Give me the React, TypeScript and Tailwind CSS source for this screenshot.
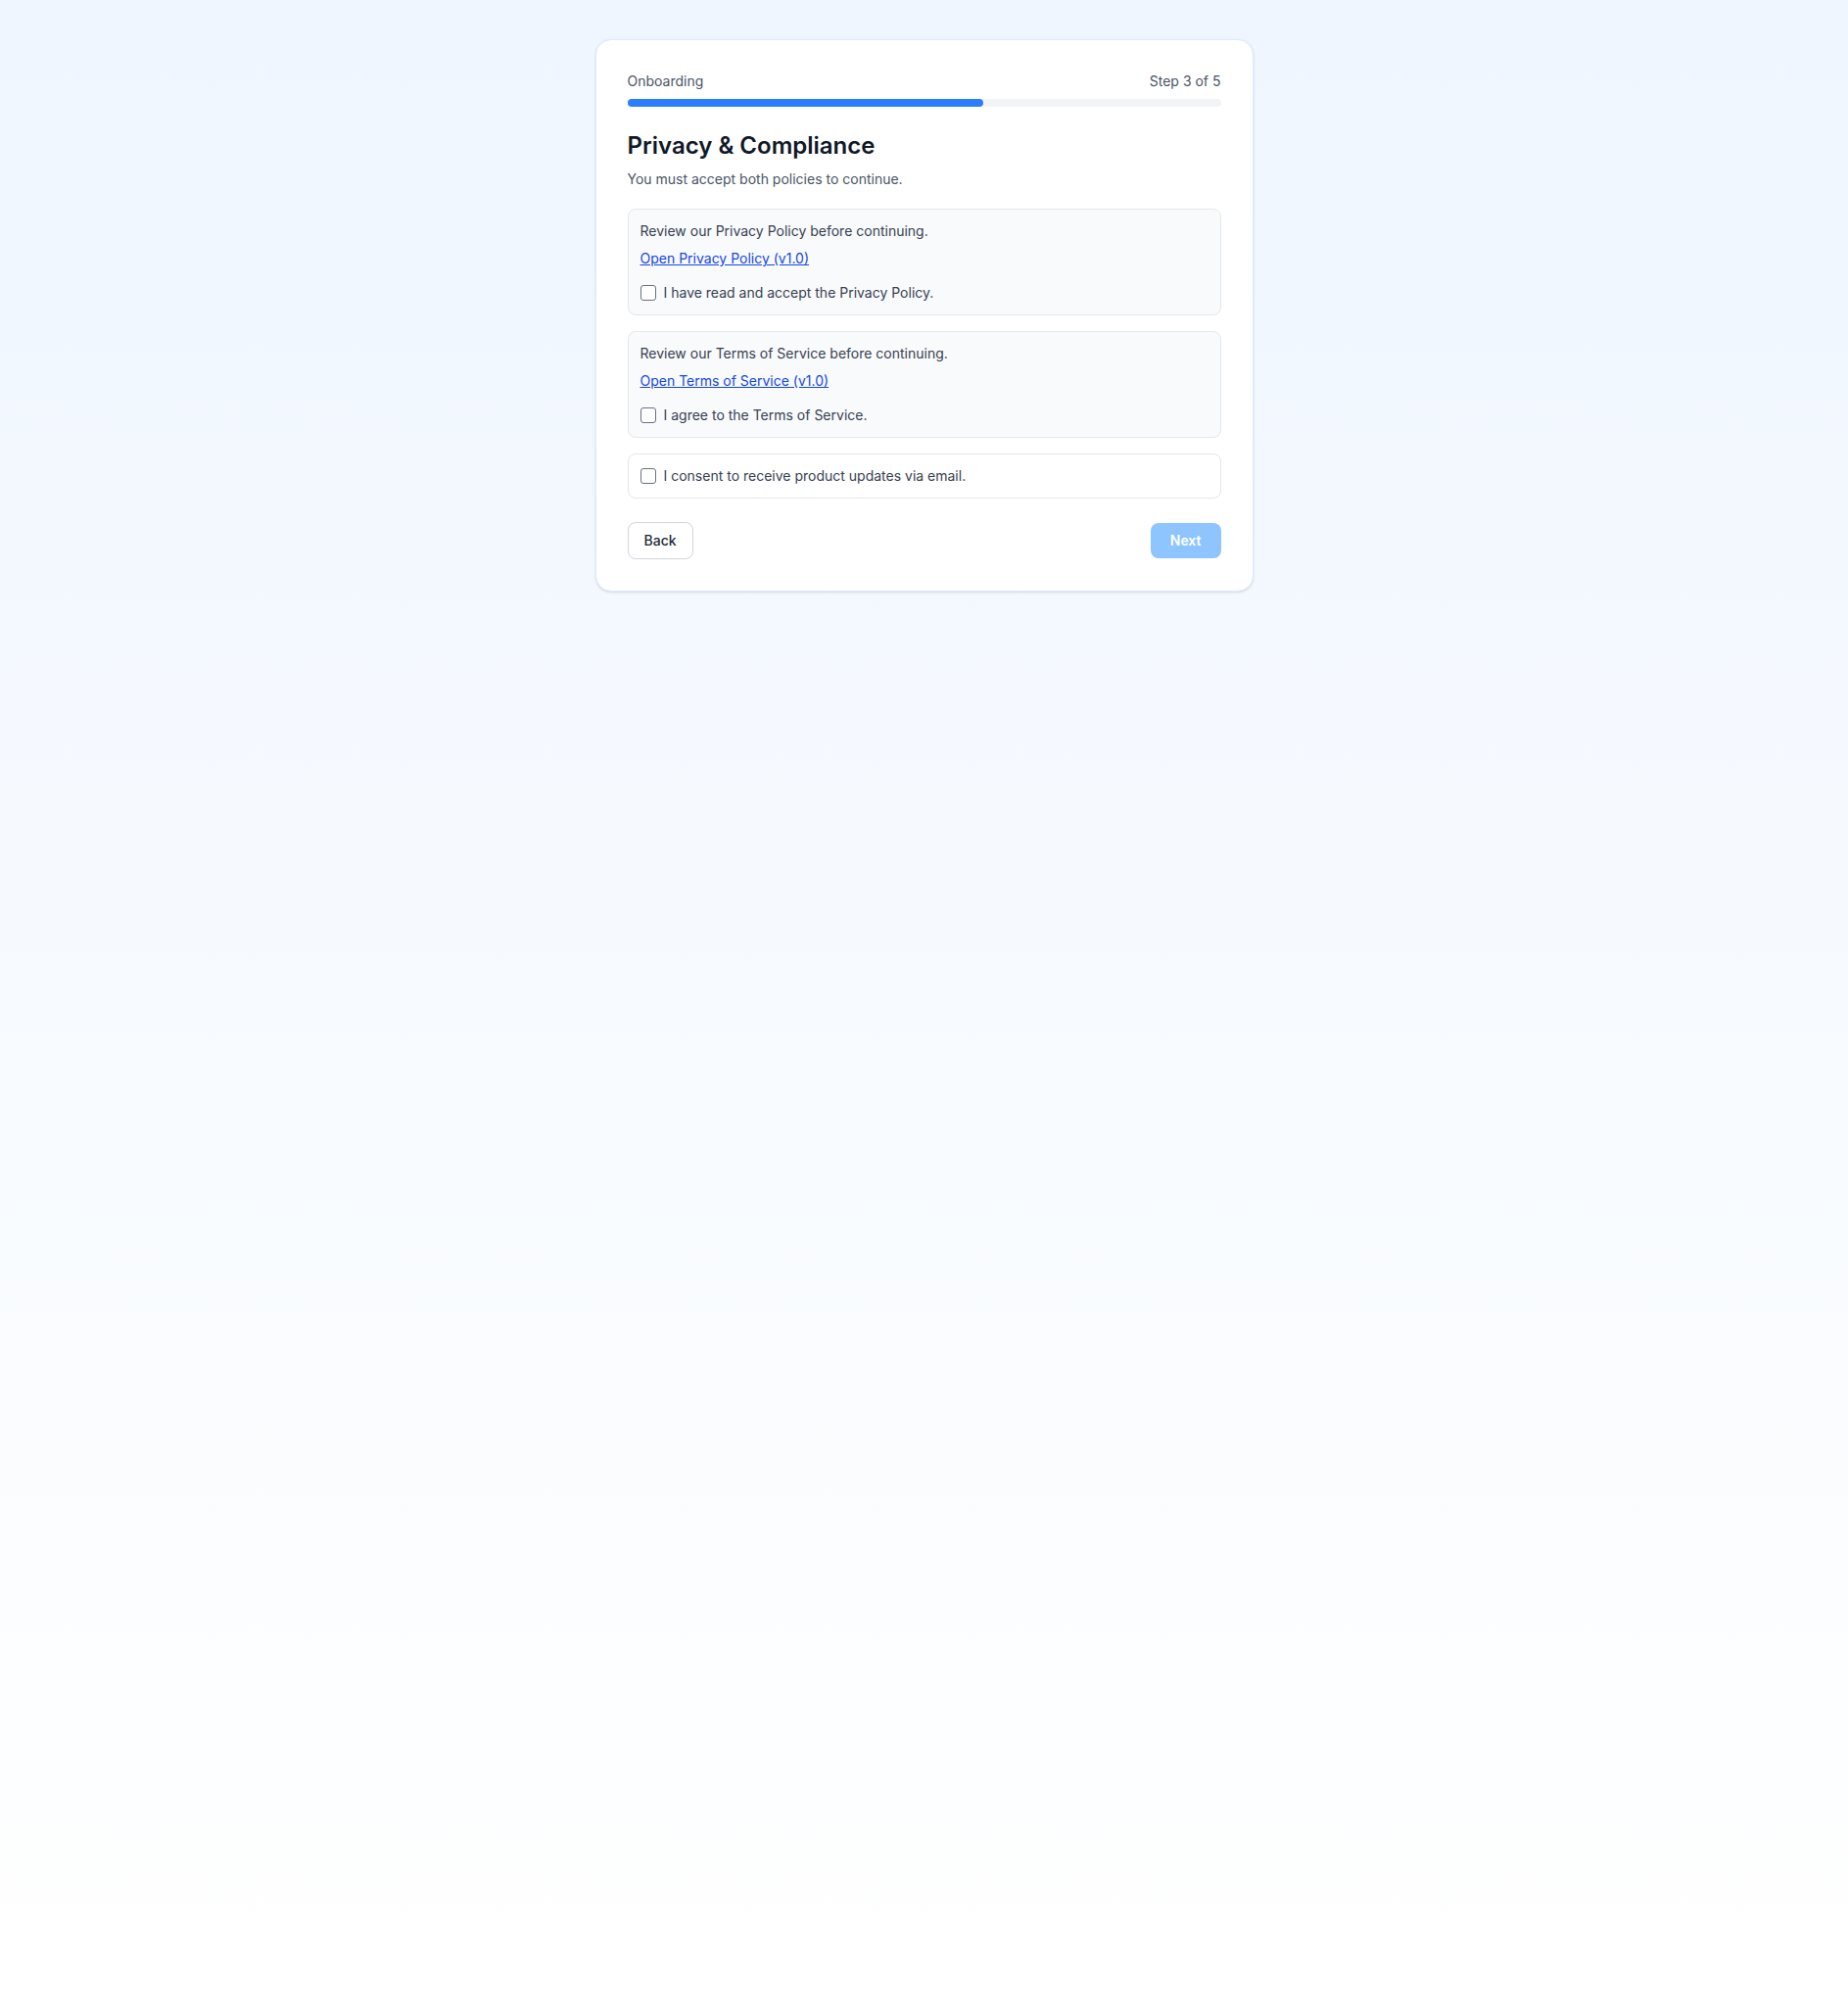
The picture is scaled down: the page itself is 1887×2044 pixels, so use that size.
import React from "react";

function Check({ label }: { label: string }) {
  return (
    <label className="flex items-center gap-2 text-sm text-gray-700">
      <span className="block h-4 w-4 rounded-[3px] border border-gray-500 bg-white"></span>
      <span>{label}</span>
    </label>
  );
}

export default function App() {
  return (
    <div
      className="min-h-screen bg-linear-to-b from-blue-50 to-white pt-10"
      style={{ fontFamily: "Inter, 'Noto Sans', sans-serif" }}
    >
      <div className="mx-auto max-w-2xl rounded-2xl border border-blue-100 bg-white p-8 shadow-sm">
        <div className="flex items-center justify-between text-sm text-gray-600">
          <span>Onboarding</span>
          <span>Step 3 of 5</span>
        </div>
        <div className="mt-2 h-2 w-full rounded-full bg-gray-100">
          <div className="h-2 w-[60%] rounded-full bg-blue-500"></div>
        </div>

        <h1 className="mt-6 text-2xl font-semibold text-gray-900">Privacy &amp; Compliance</h1>
        <p className="mt-2 text-sm text-gray-600">You must accept both policies to continue.</p>

        <div className="mt-5 flex flex-col gap-4">
          <div className="rounded-lg border border-gray-200 bg-gray-50 p-3">
            <p className="text-sm text-gray-700">Review our Privacy Policy before continuing.</p>
            <a href="#" className="mt-2 block w-fit text-sm text-blue-700 underline">
              Open Privacy Policy (v1.0)
            </a>
            <div className="mt-[15px]">
              <Check label="I have read and accept the Privacy Policy." />
            </div>
          </div>

          <div className="rounded-lg border border-gray-200 bg-gray-50 p-3">
            <p className="text-sm text-gray-700">Review our Terms of Service before continuing.</p>
            <a href="#" className="mt-2 block w-fit text-sm text-blue-700 underline">
              Open Terms of Service (v1.0)
            </a>
            <div className="mt-[15px]">
              <Check label="I agree to the Terms of Service." />
            </div>
          </div>

          <div className="rounded-lg border border-gray-200 bg-white p-3">
            <Check label="I consent to receive product updates via email." />
          </div>
        </div>

        <div className="mt-6 flex items-center justify-between">
          <button className="rounded-lg border border-gray-300 bg-white px-4 py-2 text-sm font-medium text-gray-800">
            Back
          </button>
          <button className="rounded-lg bg-blue-300 px-5 py-2 text-sm font-semibold text-white">
            Next
          </button>
        </div>
      </div>
    </div>
  );
}
